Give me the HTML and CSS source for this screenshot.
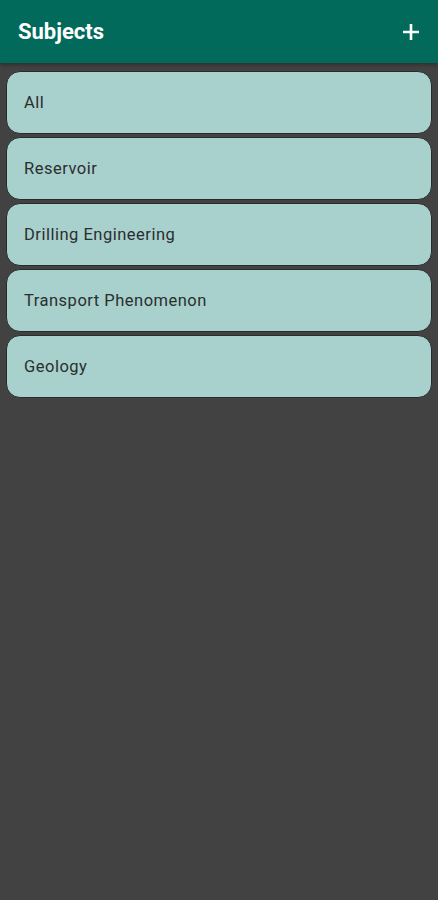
FILE: index.html
```html
<!DOCTYPE html>
<html lang="en">
<head>
    <meta charset="UTF-8">
    <meta name="viewport" content="width=device-width, initial-scale=1.0">
    <title>Subjects</title>
    <link rel="stylesheet" href="styles.css">
</head>
<body>
    <header class="app-bar">
        <h1>Subjects</h1>
        <button class="add-btn" aria-label="Add subject">
            <svg width="18" height="18" viewBox="0 0 18 18">
                <path d="M9 1v16M1 9h16" stroke="#fff" stroke-width="2.6" fill="none"/>
            </svg>
        </button>
    </header>
    <main class="subject-list">
        <div class="subject-card">All</div>
        <div class="subject-card">Reservoir</div>
        <div class="subject-card">Drilling Engineering</div>
        <div class="subject-card">Transport Phenomenon</div>
        <div class="subject-card">Geology</div>
    </main>
</body>
</html>
```

FILE: styles.css
```css
body {
    font-family: Roboto, 'Noto Sans', Arial, sans-serif;
    background: #424242;
    margin: 0;
    padding: 0;
    min-height: 100vh;
}
.app-bar {
    display: flex;
    align-items: center;
    justify-content: space-between;
    height: 63px;
    padding: 0 18px;
    background: #016a5a;
    box-shadow: 0 2px 4px rgba(0,0,0,0.3);
}
.app-bar h1 {
    margin: 0;
    color: #fff;
    font-size: 22px;
    font-weight: 700;
}
.add-btn {
    display: flex;
    padding: 0;
    background: none;
    border: none;
    cursor: pointer;
}
.subject-list {
    display: flex;
    flex-direction: column;
    gap: 3px;
    padding: 8px 6px;
}
.subject-card {
    display: flex;
    align-items: center;
    height: 61px;
    padding: 0 17px;
    background: #a8d0cd;
    border: 1px solid #2a2a2a;
    border-radius: 14px;
    color: #2a2f2e;
    font-size: 16.5px;
    letter-spacing: 0.5px;
}
```
